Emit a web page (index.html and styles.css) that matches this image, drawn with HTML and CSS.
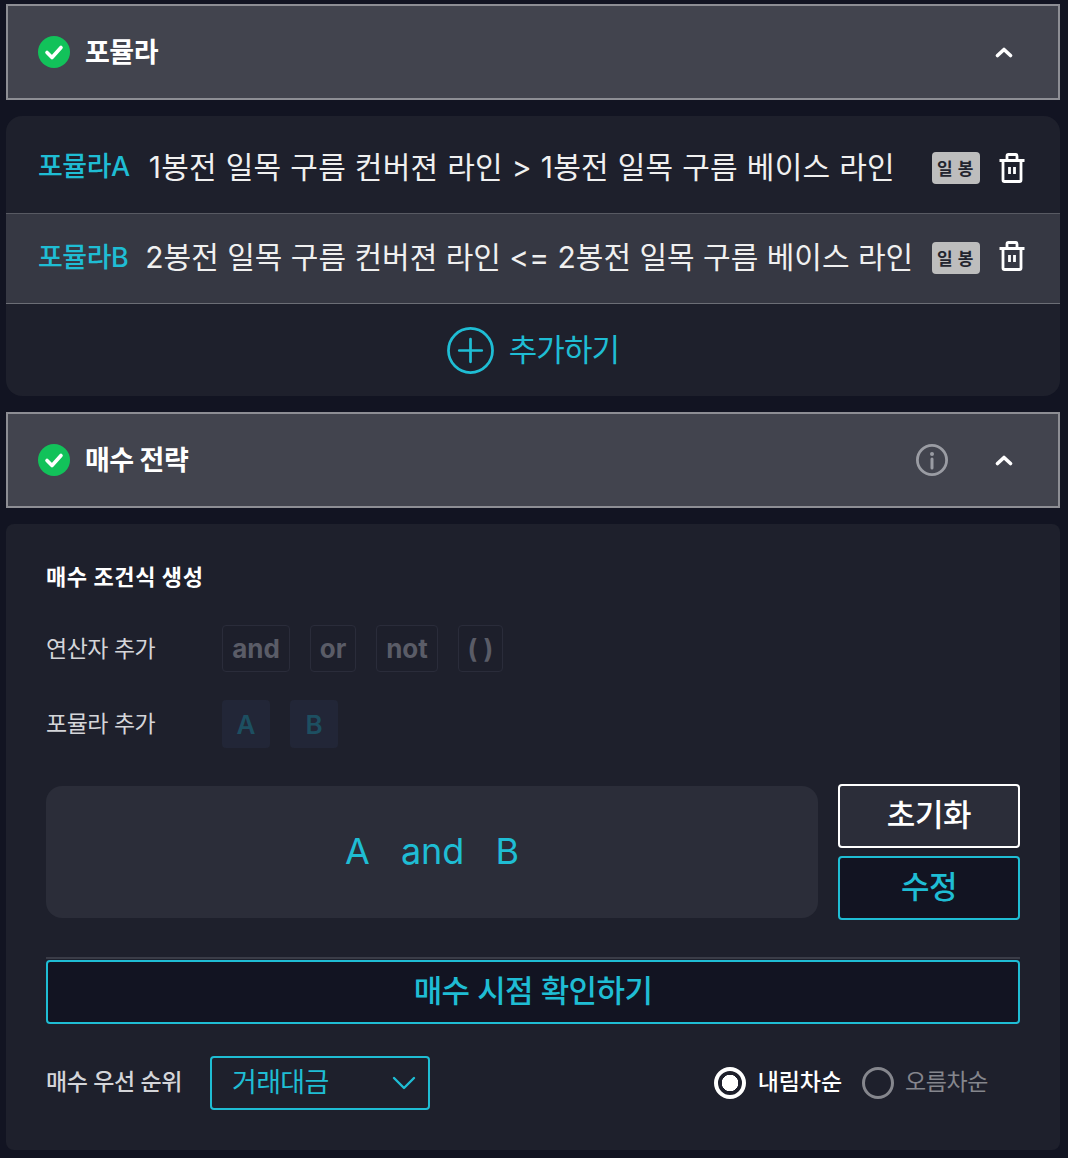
FILE: index.html
```html
<!DOCTYPE html>
<html lang="ko">
<head>
<meta charset="utf-8">
<title>포뮬라</title>
<link rel="stylesheet" href="styles.css">
</head>
<body>
<main class="page">
  <section class="head">
    <svg class="check" viewBox="0 0 32 32"><circle cx="16" cy="16" r="16" fill="#12c25a"/><path d="M9 16.500l5 5 9-10" fill="none" stroke="#fff" stroke-width="3.600" stroke-linecap="round" stroke-linejoin="round"/></svg>
    <h2 class="head-title">포뮬라</h2>
    <svg class="chev" viewBox="0 0 18 12"><path d="M2.500 9.500L9 3.500l6.500 6" fill="none" stroke="#fff" stroke-width="3.600" stroke-linecap="round" stroke-linejoin="round"/></svg>
  </section>

  <section class="panel formula-panel">
    <div class="row row-a">
      <span class="f-name">포뮬라A</span>
      <span class="f-text">1봉전 일목 구름 컨버젼 라인 &gt; 1봉전 일목 구름 베이스 라인</span>
      <span class="badge">일봉</span>
      <svg class="trash" viewBox="0 0 28 30"><path d="M1.500 7.500h25M5 7.500v19.500a1.500 1.500 0 0 0 1.500 1.500h15a1.500 1.500 0 0 0 1.500-1.500V7.500M9 7.500V3a1.500 1.500 0 0 1 1.500-1.500h7A1.500 1.500 0 0 1 19 3v4.500M11.500 14v7M16.500 14v7" fill="none" stroke="#fff" stroke-width="2.800"/></svg>
    </div>
    <div class="row row-b">
      <span class="f-name">포뮬라B</span>
      <span class="f-text">2봉전 일목 구름 컨버젼 라인 &lt;= 2봉전 일목 구름 베이스 라인</span>
      <span class="badge">일봉</span>
      <svg class="trash" viewBox="0 0 28 30"><path d="M1.500 7.500h25M5 7.500v19.500a1.500 1.500 0 0 0 1.500 1.500h15a1.500 1.500 0 0 0 1.500-1.500V7.500M9 7.500V3a1.500 1.500 0 0 1 1.500-1.500h7A1.500 1.500 0 0 1 19 3v4.500M11.500 14v7M16.500 14v7" fill="none" stroke="#fff" stroke-width="2.800"/></svg>
    </div>
    <div class="add">
      <svg class="plus" viewBox="0 0 48 48"><circle cx="24" cy="24" r="22.500" fill="none" stroke="#1fbdd4" stroke-width="2.800"/><path d="M24 12.500v23M12.500 24h23" fill="none" stroke="#1fbdd4" stroke-width="2.800" stroke-linecap="round"/></svg>
      <span class="add-text">추가하기</span>
    </div>
  </section>

  <section class="head">
    <svg class="check" viewBox="0 0 32 32"><circle cx="16" cy="16" r="16" fill="#12c25a"/><path d="M9 16.500l5 5 9-10" fill="none" stroke="#fff" stroke-width="3.600" stroke-linecap="round" stroke-linejoin="round"/></svg>
    <h2 class="head-title">매수 전략</h2>
    <svg class="info" viewBox="0 0 32 32"><circle cx="16" cy="16" r="14.600" fill="none" stroke="#9a9ca3" stroke-width="2.800"/><circle cx="16" cy="10" r="2" fill="#9a9ca3"/><path d="M16 15v9" stroke="#9a9ca3" stroke-width="3" stroke-linecap="round"/></svg>
    <svg class="chev chev-tight" viewBox="0 0 18 12"><path d="M2.500 9.500L9 3.500l6.500 6" fill="none" stroke="#fff" stroke-width="3.600" stroke-linecap="round" stroke-linejoin="round"/></svg>
  </section>

  <section class="panel strategy">
    <h3 class="sub-title">매수 조건식 생성</h3>
    <div class="tool-row op-row">
      <span class="tool-label">연산자 추가</span>
      <div class="tools">
        <span class="op op-and">and</span>
        <span class="op op-or">or</span>
        <span class="op op-not">not</span>
        <span class="op op-par">( )</span>
      </div>
    </div>
    <div class="tool-row fm-row">
      <span class="tool-label">포뮬라 추가</span>
      <div class="tools">
        <span class="fm">A</span>
        <span class="fm">B</span>
      </div>
    </div>
    <div class="editor">
      <div class="expr"><span>A</span><span>and</span><span>B</span></div>
      <div class="editor-btns">
        <button class="btn btn-reset">초기화</button>
        <button class="btn btn-edit">수정</button>
      </div>
    </div>
    <div class="rule"></div>
    <button class="btn btn-check">매수 시점 확인하기</button>
    <div class="priority">
      <span class="pri-label">매수 우선 순위</span>
      <div class="select">
        <span class="sel-text">거래대금</span>
        <svg class="sel-arrow" viewBox="0 0 24 14"><path d="M2 2l10 10L22 2" fill="none" stroke="#1fbdd4" stroke-width="2.400" stroke-linecap="round" stroke-linejoin="round"/></svg>
      </div>
      <div class="radios">
        <span class="radio radio-on"></span><span class="radio-text on">내림차순</span>
        <span class="radio radio-off"></span><span class="radio-text off">오름차순</span>
      </div>
    </div>
  </section>
</main>
</body>
</html>
```
FILE: styles.css
```css
* { box-sizing: border-box; }
html, body { margin: 0; padding: 0; }
body {
  width: 1068px;
  height: 1158px;
  overflow: hidden;
  background: #121422;
  font-family: "Inter", "Noto Sans CJK KR", sans-serif;
  color: #fff;
}
.page { padding: 4px 8px 0 6px; }

.head {
  height: 96px;
  display: flex;
  align-items: center;
  padding: 0 45px 0 30px;
  background: #42444e;
  border: 2px solid #8d8e94;
}
.check { width: 32px; height: 32px; flex: none; }
.head-title {
  margin: 0 0 4px 15px;
  font-size: 27px;
  font-weight: 700;
  letter-spacing: -0.5px;
}
.chev { width: 18px; height: 12px; margin-left: auto; flex: none; }
.chev-tight { margin-left: 47px; }
.info { width: 32px; height: 32px; margin-left: auto; flex: none; }

.panel { background: #1e202c; }
.formula-panel {
  margin: 16px 0;
  height: 280px;
  border-radius: 16px;
  overflow: hidden;
}
.row {
  display: flex;
  align-items: center;
  padding: 0 34px 0 32px;
}
.row-a { height: 97px; }
.row-b {
  height: 91px;
  background: #363843;
  border-top: 1.5px solid #585a63;
  border-bottom: 1.5px solid #6c6e76;
}
.f-name { color: #1fbdd4; font-size: 27px; font-weight: 500; letter-spacing: -0.5px; margin-right: 19px; white-space: nowrap; }
.f-text { color: #f0f0f0; font-size: 30px; white-space: nowrap; }
.row-a .f-text { letter-spacing: 0.3px; }
.row-b .f-name { margin: 0 17px 6px 0; }
.row-b .f-text { margin-bottom: 8px; }
.badge {
  margin-left: auto;
  width: 48px;
  height: 32px;
  display: flex;
  align-items: center;
  padding-left: 5px;
  background: #bdbdbd;
  border-radius: 4px;
  color: #23242e;
  font-size: 17px;
  font-weight: 700;
  letter-spacing: 5px;
  white-space: nowrap;
}
.row-a .badge { margin-top: 6px; }
.row-b .badge { margin-bottom: 2px; }
.trash { width: 28px; height: 30px; margin-left: 18px; flex: none; }
.row-a .trash { margin-top: 6px; }
.row-b .trash { margin-bottom: 6px; }

.add {
  height: 92px;
  display: flex;
  align-items: center;
  justify-content: center;
  gap: 15px;
}
.plus { width: 47px; height: 47px; }
.add-text { color: #1fbdd4; font-size: 31px; letter-spacing: -0.9px; margin-bottom: 6px; }

.strategy {
  margin-top: 16px;
  height: 626px;
  border-radius: 8px;
  padding: 38px 40px 0;
}
.sub-title { margin: 0; font-size: 22px; line-height: 30px; font-weight: 700; letter-spacing: 0.6px; }
.tool-row { display: flex; align-items: center; }
.op-row { margin-top: 33px; }
.fm-row { margin-top: 28px; }
.tool-label { width: 176px; margin-bottom: 4px; color: #d4d5d9; font-size: 23px; letter-spacing: -0.5px; flex: none; }
.tools { display: flex; gap: 20px; }
.op {
  height: 47px;
  display: flex;
  align-items: center;
  justify-content: center;
  background: #1d1f2b;
  border: 1.5px solid #2a2c3a;
  border-radius: 4px;
  color: #5a5c67;
  font-size: 26px;
  font-weight: 700;
}
.op-and { width: 68px; }
.op-or { width: 46px; }
.op-not { width: 62px; }
.op-par { width: 45px; }
.fm {
  width: 48px;
  height: 48px;
  display: flex;
  align-items: center;
  justify-content: center;
  background: #222637;
  border-radius: 4px;
  color: #1d4f61;
  font-size: 26px;
  font-weight: 600;
}

.editor { display: flex; gap: 20px; margin-top: 36px; }
.expr {
  flex: none;
  width: 772px;
  height: 132px;
  margin-top: 2px;
  padding-bottom: 2px;
  display: flex;
  align-items: center;
  justify-content: center;
  gap: 31px;
  background: #2b2d39;
  border-radius: 16px;
  color: #1fbdd4;
  font-size: 36px;
}
.editor-btns { display: flex; flex-direction: column; gap: 8px; width: 182px; }
.btn {
  display: block;
  height: 64px;
  padding: 0 0 8px;
  border-radius: 4px;
  font-family: inherit;
  font-size: 31px;
  letter-spacing: -0.4px;
}
.btn-reset { background: #2b2d39; border: 2px solid #fff; color: #fff; font-weight: 500; }
.btn-edit { background: #121422; border: 2px solid #1fbdd4; color: #1fbdd4; font-weight: 500; }

.rule { height: 2px; margin-top: 37px; background: #3a3c47; }
.btn-check {
  width: 974px;
  margin-top: 1px;
  background: #121422;
  border: 2px solid #1fbdd4;
  color: #1fbdd4;
  font-weight: 500;
  letter-spacing: -0.6px;
}

.priority { display: flex; align-items: center; margin-top: 32px; }
.pri-label { width: 164px; margin-bottom: 6px; color: #d4d5d9; font-size: 23px; font-weight: 500; letter-spacing: -0.4px; flex: none; }
.select {
  width: 220px;
  height: 54px;
  display: flex;
  align-items: center;
  justify-content: space-between;
  padding: 0 12px 0 20px;
  border: 2px solid #1fbdd4;
  border-radius: 4px;
  color: #1fbdd4;
  font-size: 27px;
  letter-spacing: -0.7px;
}
.sel-text { margin-bottom: 6px; }
.sel-arrow { width: 24px; height: 14px; }
.radios { margin-left: auto; margin-right: 32px; display: flex; align-items: center; }
.radio {
  width: 32px;
  height: 32px;
  border-radius: 50%;
  flex: none;
}
.radio-on {
  border: 4px solid #fff;
  background: radial-gradient(circle, #fff 0 8px, transparent 8.5px);
}
.radio-off { border: 3.5px solid #85868d; margin-left: 20px; }
.radio-text { margin: 0 0 6px 12px; color: #85868d; font-size: 23px; letter-spacing: -0.4px; }
.radio-text.off { margin-left: 11px; }
.radio-text.on { color: #fff; font-weight: 500; letter-spacing: -0.1px; }
```
